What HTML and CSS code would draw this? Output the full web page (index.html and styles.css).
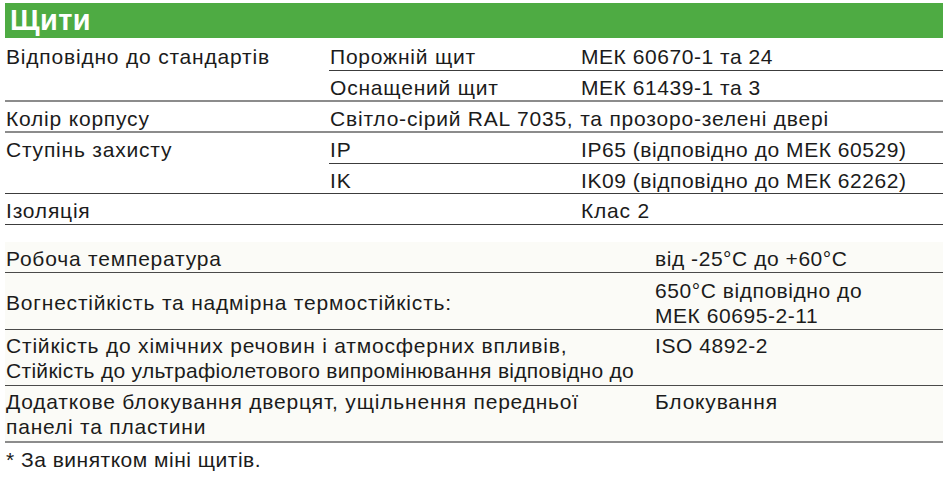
FILE: index.html
```html
<!DOCTYPE html>
<html lang="uk">
<head>
<meta charset="utf-8">
<title>Щити</title>
<link rel="stylesheet" href="styles.css">
</head>
<body>
<div class="page">
  <div class="title-bar"><h1 class="title">Щити</h1></div>

  <div class="spec">
    <div class="cell c1 span2 grey">Відповідно до стандартів</div>
    <div class="cell c2 dark">Порожній щит</div>
    <div class="cell c3 dark num">МЕК 60670-1 та 24</div>
    <div class="cell c2 grey">Оснащений щит</div>
    <div class="cell c3 grey num">МЕК 61439-1 та 3</div>

    <div class="cell c1 grey">Колір корпусу</div>
    <div class="cell c23 grey">Світло-сірий RAL 7035, та прозоро-зелені двері</div>

    <div class="cell c1 span2 dark">Ступінь захисту</div>
    <div class="cell c2 dark">IP</div>
    <div class="cell c3 dark num">IP65 (відповідно до МЕК 60529)</div>
    <div class="cell c2 dark">IK</div>
    <div class="cell c3 dark num">IK09 (відповідно до МЕК 62262)</div>

    <div class="cell c1 dark">Ізоляція</div>
    <div class="cell c2 dark"></div>
    <div class="cell c3 dark">Клас 2</div>
  </div>

  <div class="extra">
    <div class="xcell xl dark">Робоча температура</div>
    <div class="xcell xv dark num">від -25°C до +60°C</div>

    <div class="xcell xl mid dark pb">Вогнестійкість та надмірна термостійкість:</div>
    <div class="xcell xv dark pb num">650°C відповідно до<br>МЕК 60695-2-11</div>

    <div class="xcell xl dark pc">Стійкість до хімічних речовин і атмосферних впливів,<br><span class="tight">Стійкість до ультрафіолетового випромінювання відповідно до</span></div>
    <div class="xcell xv dark pc num">ISO 4892-2</div>

    <div class="xcell xl grey pc">Додаткове блокування дверцят, ущільнення передньої<br>панелі та пластини</div>
    <div class="xcell xv grey pc">Блокування</div>
  </div>

  <p class="note">* За винятком міні щитів.</p>
</div>
</body>
</html>
```

FILE: styles.css
```css
html, body {
  margin: 0;
  padding: 0;
  background: #ffffff;
}

body {
  font-family: "Liberation Sans", Arial, sans-serif;
  font-size: 21px;
  line-height: 25px;
  letter-spacing: 0.8px;
  color: #1b1b1b;
}

.page {
  width: 938px;
  margin: 3px 0 0 5px;
}

.title-bar {
  background: #4eab43;
  height: 35px;
  display: flex;
  align-items: center;
  padding-left: 5px;
}

.title {
  margin: 0;
  font-size: 29px;
  line-height: 35px;
  font-weight: bold;
  color: #ffffff;
  letter-spacing: 0.4px;
}

.spec {
  display: grid;
  grid-template-columns: 324px 251px 1fr;
  grid-template-rows: 31px 31px 31px 31px 30px 31px;
  margin-top: 2px;
}

.cell {
  box-sizing: border-box;
  padding: 4px 0 0 1px;
  white-space: nowrap;
}

.c1 { grid-column: 1; }
.c2 { grid-column: 2; }
.c3 { grid-column: 3; }
.c23 { grid-column: 2 / span 2; }
.span2 { grid-row: span 2; }

.num { letter-spacing: 0.55px; }

.dark { border-bottom: 1px solid #3c3c3c; }
.grey { border-bottom: 2px solid #8c8c8c; }

.extra {
  display: grid;
  grid-template-columns: 648px 1fr;
  grid-template-rows: 31px 57px 56px 57px;
  margin-top: 17px;
  background: #fbfbf7;
}

.xcell {
  box-sizing: border-box;
  padding: 4px 0 0 1px;
  white-space: nowrap;
}

.xl { grid-column: 1; }
.xv { grid-column: 2; padding-left: 2px; }

.xcell.pb { padding-top: 5px; }
.xcell.pc { padding-top: 3px; }

.xcell.mid {
  display: flex;
  align-items: center;
  padding-top: 2px;
}

.tight { letter-spacing: 0.3px; }

.extra .dark { border-bottom-color: #4a4a4a; }

.note {
  margin: 4px 0 0 0;
  padding-left: 1px;
  letter-spacing: 0.5px;
}
```
